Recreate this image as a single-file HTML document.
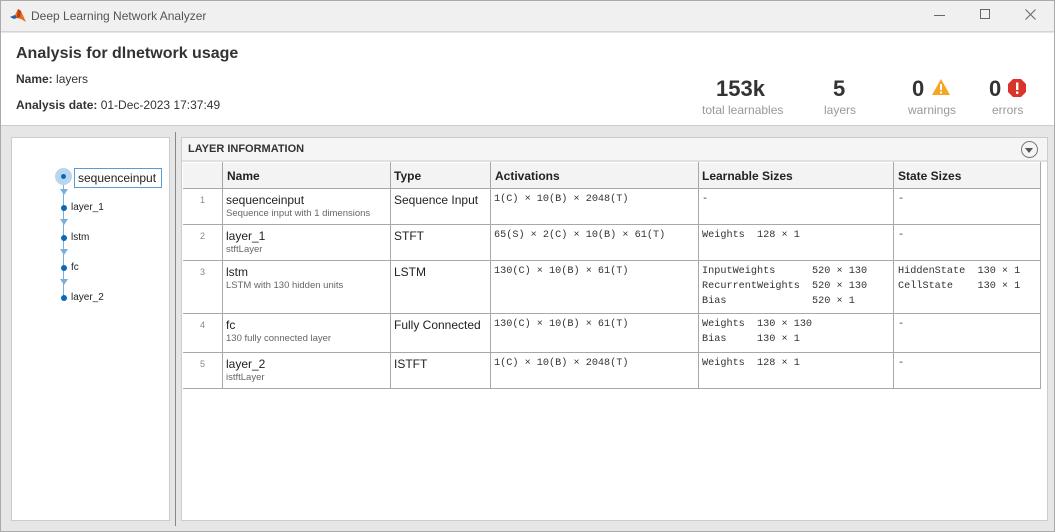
<!DOCTYPE html>
<html><head><meta charset="utf-8"><style>
*{margin:0;padding:0;box-sizing:border-box}
body{width:1055px;height:532px;overflow:hidden;background:#e6e6e6;font-family:"Liberation Sans",sans-serif;position:relative;color:#222}
.a{position:absolute;white-space:nowrap}
.m{font-family:"Liberation Mono",monospace;font-size:10.2px;line-height:15px;color:#333;white-space:pre}
.h{font-weight:bold;font-size:12px}
.sub{font-size:9.5px;color:#666}
.nm{font-size:12px;color:#222}
.num{font-size:9px;color:#888}
.hl{position:absolute;height:1px;background:#a8a8a8;left:183px;width:858px}
.vl{position:absolute;width:1px;background:#a8a8a8;top:162px;height:226px}
</style></head><body>
<div class="a" style="left:0;top:0;width:1055px;height:32px;background:#f0f0f0;border-bottom:1px solid #d4d4d4"></div>
<svg class="a" style="left:9px;top:7px" width="18" height="16" viewBox="0 0 18 16"><path d="M1 10 L6 8 L9 2 L12 4 L17 15 L12 12 L8 11 Z" fill="#e8701a"/><path d="M1 10 L6 8 L8 11 L5 12 Z" fill="#2b5fa8"/><path d="M9 2 L12 4 L11 10 L8 11 Z" fill="#c0391b"/></svg>
<div class="a" style="left:31px;top:9px;font-size:12px;color:#555">Deep Learning Network Analyzer</div>
<div class="a" style="left:934px;top:15px;width:11px;height:1px;background:#666"></div>
<div class="a" style="left:980px;top:9px;width:10px;height:10px;border:1px solid #666"></div>
<svg class="a" style="left:1025px;top:9px" width="11" height="11" viewBox="0 0 11 11"><path d="M0.5 0.5 L10.5 10.5 M10.5 0.5 L0.5 10.5" stroke="#666" stroke-width="1"/></svg>
<div class="a" style="left:0;top:33px;width:1055px;height:93px;background:#fff;border-bottom:1px solid #ccc"></div>
<div class="a" style="left:16px;top:45px;font-size:16px;font-weight:bold;color:#333">Analysis for dlnetwork usage</div>
<div class="a" style="left:16px;top:72px;font-size:12px;color:#333"><b>Name:</b> layers</div>
<div class="a" style="left:16px;top:98px;font-size:12px;color:#333"><b>Analysis date:</b> 01-Dec-2023 17:37:49</div>
<div class="a" style="left:716px;top:76px;font-size:22px;font-weight:bold;color:#333">153k</div>
<div class="a" style="left:702px;top:103px;font-size:12px;color:#999">total learnables</div>
<div class="a" style="left:833px;top:76px;font-size:22px;font-weight:bold;color:#333">5</div>
<div class="a" style="left:824px;top:103px;font-size:12px;color:#999">layers</div>
<div class="a" style="left:912px;top:76px;font-size:22px;font-weight:bold;color:#333">0</div>
<svg class="a" style="left:931px;top:78px" width="20" height="18" viewBox="0 0 20 18"><path d="M10 1 L19 17 L1 17 Z" fill="#f5a623"/><rect x="9" y="6" width="2" height="6" fill="#fff"/><rect x="9" y="13.5" width="2" height="2" fill="#fff"/></svg>
<div class="a" style="left:908px;top:103px;font-size:12px;color:#999">warnings</div>
<div class="a" style="left:989px;top:76px;font-size:22px;font-weight:bold;color:#333">0</div>
<svg class="a" style="left:1007px;top:78px" width="20" height="20" viewBox="0 0 20 20"><path d="M6 1 L14 1 L19 6 L19 14 L14 19 L6 19 L1 14 L1 6 Z" fill="#d9342b"/><rect x="9" y="4.5" width="2.4" height="7.5" fill="#fff"/><rect x="9" y="13.5" width="2.4" height="2.4" fill="#fff"/></svg>
<div class="a" style="left:992px;top:103px;font-size:12px;color:#999">errors</div>
<!-- left panel -->
<div class="a" style="left:11px;top:137px;width:159px;height:384px;background:#fff;border:1px solid #ccc"></div>
<div class="a" style="left:175px;top:132px;width:1px;height:394px;background:#888"></div>
<div class="a" style="left:63px;top:177px;width:1px;height:122px;background:#7aaedb"></div>
<div class="a" style="left:55px;top:168px;width:17px;height:17px;border-radius:50%;background:#b8d6ef"></div>
<div class="a" style="left:61px;top:174px;width:5px;height:5px;border-radius:50%;background:#0a6ab8"></div>
<div class="a" style="left:74px;top:168px;width:88px;height:20px;border:1px solid #5a9bd4;background:#fff;font-size:12px;padding:2px 3px;color:#222">sequenceinput</div>
<div class="a" style="left:60px;top:189px;border-left:4px solid transparent;border-right:4px solid transparent;border-top:6px solid #7aaedb"></div>
<div class="a" style="left:60px;top:219px;border-left:4px solid transparent;border-right:4px solid transparent;border-top:6px solid #7aaedb"></div>
<div class="a" style="left:60px;top:249px;border-left:4px solid transparent;border-right:4px solid transparent;border-top:6px solid #7aaedb"></div>
<div class="a" style="left:60px;top:279px;border-left:4px solid transparent;border-right:4px solid transparent;border-top:6px solid #7aaedb"></div>
<div class="a" style="left:61px;top:205px;width:6px;height:6px;border-radius:50%;background:#0a6ab8"></div>
<div class="a" style="left:61px;top:235px;width:6px;height:6px;border-radius:50%;background:#0a6ab8"></div>
<div class="a" style="left:61px;top:265px;width:6px;height:6px;border-radius:50%;background:#0a6ab8"></div>
<div class="a" style="left:61px;top:295px;width:6px;height:6px;border-radius:50%;background:#0a6ab8"></div>
<div class="a" style="left:71px;top:202px;font-size:10px">layer_1</div>
<div class="a" style="left:71px;top:232px;font-size:10px">lstm</div>
<div class="a" style="left:71px;top:262px;font-size:10px">fc</div>
<div class="a" style="left:71px;top:292px;font-size:10px">layer_2</div>
<!-- right panel -->
<div class="a" style="left:181px;top:137px;width:867px;height:384px;background:#fff;border:1px solid #ccc"></div>
<div class="a" style="left:182px;top:138px;width:865px;height:24px;background:#f5f5f5;border-bottom:2px solid #e0e0e0"></div>
<div class="a" style="left:188px;top:143px;font-size:11px;font-weight:bold;color:#333">LAYER INFORMATION</div>
<div class="a" style="left:1021px;top:141px;width:17px;height:17px;border-radius:50%;border:1px solid #777"></div>
<div class="a" style="left:1025px;top:148px;border-left:4.5px solid transparent;border-right:4.5px solid transparent;border-top:5px solid #555"></div>
<div class="a" style="left:183px;top:163px;width:858px;height:25px;background:#f3f3f3"></div>
<div class="hl" style="top:188px"></div><div class="hl" style="top:224px"></div><div class="hl" style="top:260px"></div><div class="hl" style="top:313px"></div><div class="hl" style="top:352px"></div><div class="hl" style="top:388px"></div>
<div class="vl" style="left:222px"></div><div class="vl" style="left:390px"></div><div class="vl" style="left:490px"></div><div class="vl" style="left:698px"></div><div class="vl" style="left:893px"></div><div class="vl" style="left:1040px"></div>
<div class="a h" style="left:227px;top:169px">Name</div>
<div class="a h" style="left:394px;top:169px">Type</div>
<div class="a h" style="left:495px;top:169px">Activations</div>
<div class="a h" style="left:702px;top:169px">Learnable Sizes</div>
<div class="a h" style="left:898px;top:169px">State Sizes</div>
<div class="a num" style="left:200px;top:195px">1</div>
<div class="a nm" style="left:226px;top:193px">sequenceinput</div><div class="a sub" style="left:226px;top:208px">Sequence input with 1 dimensions</div>
<div class="a nm" style="left:394px;top:193px">Sequence Input</div>
<div class="a m" style="left:494px;top:192px">1(C) × 10(B) × 2048(T)</div>
<div class="a m" style="left:702px;top:192px">-</div><div class="a m" style="left:898px;top:192px">-</div>
<div class="a num" style="left:200px;top:231px">2</div>
<div class="a nm" style="left:226px;top:229px">layer_1</div><div class="a sub" style="left:226px;top:244px">stftLayer</div>
<div class="a nm" style="left:394px;top:229px">STFT</div>
<div class="a m" style="left:494px;top:228px">65(S) × 2(C) × 10(B) × 61(T)</div>
<div class="a m" style="left:702px;top:228px">Weights  128 × 1</div><div class="a m" style="left:898px;top:228px">-</div>
<div class="a num" style="left:200px;top:267px">3</div>
<div class="a nm" style="left:226px;top:265px">lstm</div><div class="a sub" style="left:226px;top:280px">LSTM with 130 hidden units</div>
<div class="a nm" style="left:394px;top:265px">LSTM</div>
<div class="a m" style="left:494px;top:264px">130(C) × 10(B) × 61(T)</div>
<div class="a m" style="left:702px;top:264px">InputWeights      520 × 130
RecurrentWeights  520 × 130
Bias              520 × 1</div>
<div class="a m" style="left:898px;top:264px">HiddenState  130 × 1
CellState    130 × 1</div>
<div class="a num" style="left:200px;top:320px">4</div>
<div class="a nm" style="left:226px;top:318px">fc</div><div class="a sub" style="left:226px;top:333px">130 fully connected layer</div>
<div class="a nm" style="left:394px;top:318px">Fully Connected</div>
<div class="a m" style="left:494px;top:317px">130(C) × 10(B) × 61(T)</div>
<div class="a m" style="left:702px;top:317px">Weights  130 × 130
Bias     130 × 1</div><div class="a m" style="left:898px;top:317px">-</div>
<div class="a num" style="left:200px;top:359px">5</div>
<div class="a nm" style="left:226px;top:357px">layer_2</div><div class="a sub" style="left:226px;top:372px">istftLayer</div>
<div class="a nm" style="left:394px;top:357px">ISTFT</div>
<div class="a m" style="left:494px;top:356px">1(C) × 10(B) × 2048(T)</div>
<div class="a m" style="left:702px;top:356px">Weights  128 × 1</div><div class="a m" style="left:898px;top:356px">-</div>
<div class="a" style="left:0;top:0;width:1055px;height:532px;border:1px solid #aaa;pointer-events:none"></div>
</body></html>
